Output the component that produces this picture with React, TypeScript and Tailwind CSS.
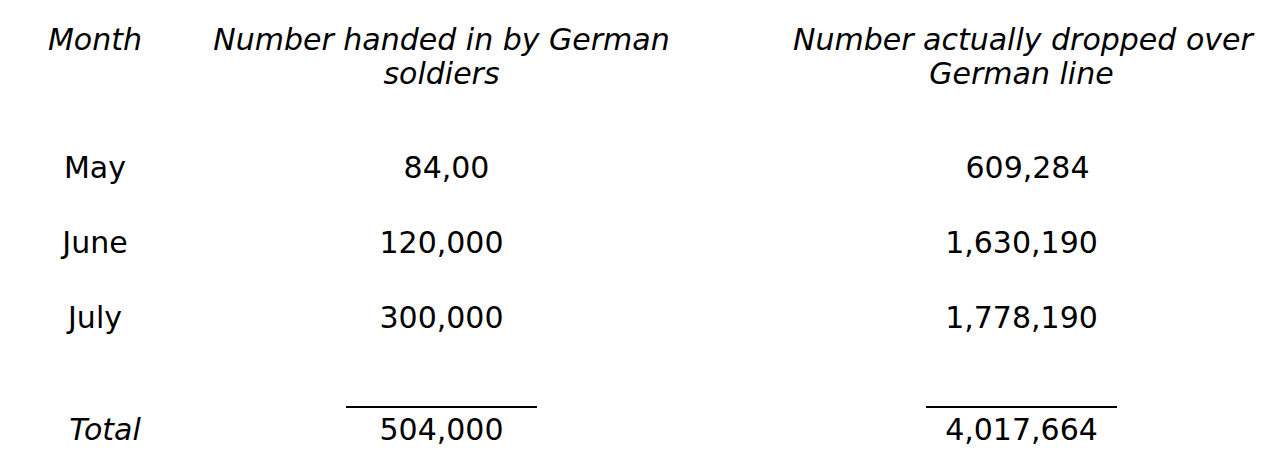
const rows = [
  { month: 'May', handed: '84,00', dropped: '609,284', handedPad: 'pl-[10px]', droppedPad: 'pl-[12px]' },
  { month: 'June', handed: '120,000', dropped: '1,630,190', handedPad: '', droppedPad: '' },
  { month: 'July', handed: '300,000', dropped: '1,778,190', handedPad: '', droppedPad: '' },
];

function Row({ children, className = '' }: { children: React.ReactNode; className?: string }) {
  return <div className={`flex leading-[34px] ${className}`}>{children}</div>;
}

export default function App() {
  return (
    <div
      className="w-[1272px] h-[474px] bg-white text-black text-[30px] overflow-hidden"
      style={{ fontFamily: '"DejaVu Sans", Verdana, sans-serif' }}
    >
      <div className="pt-[23px] flex flex-col">
        {/* header */}
        <Row className="italic">
          <div className="w-[190px] text-center">Month</div>
          <div className="ml-[20px] w-[463px] text-center whitespace-nowrap">
            Number handed in by German
            <br />
            soldiers
          </div>
          <div className="ml-[120px] w-[457px] text-center whitespace-nowrap">
            Number actually dropped over
            <br />
            German line
          </div>
        </Row>

        <div className="mt-[60px] flex flex-col gap-[41px]">
          {rows.map((r) => (
            <Row key={r.month}>
              <div className="w-[190px] text-center">{r.month}</div>
              <div className={`ml-[20px] w-[463px] text-center ${r.handedPad}`}>{r.handed}</div>
              <div className={`ml-[120px] w-[457px] text-center ${r.droppedPad}`}>{r.dropped}</div>
            </Row>
          ))}
        </div>

        {/* totals */}
        <div className="mt-[71px] flex">
          <div className="w-[190px]" />
          <div className="ml-[20px] w-[463px] flex justify-center">
            <div className="w-[191px] h-[2px] bg-black" />
          </div>
          <div className="ml-[120px] w-[457px] flex justify-center">
            <div className="w-[191px] h-[2px] bg-black" />
          </div>
        </div>
        <Row className="mt-[5px]">
          <div className="w-[190px] text-center italic pl-[20px]">Total</div>
          <div className="ml-[20px] w-[463px] text-center">504,000</div>
          <div className="ml-[120px] w-[457px] text-center">4,017,664</div>
        </Row>
      </div>
    </div>
  );
}
